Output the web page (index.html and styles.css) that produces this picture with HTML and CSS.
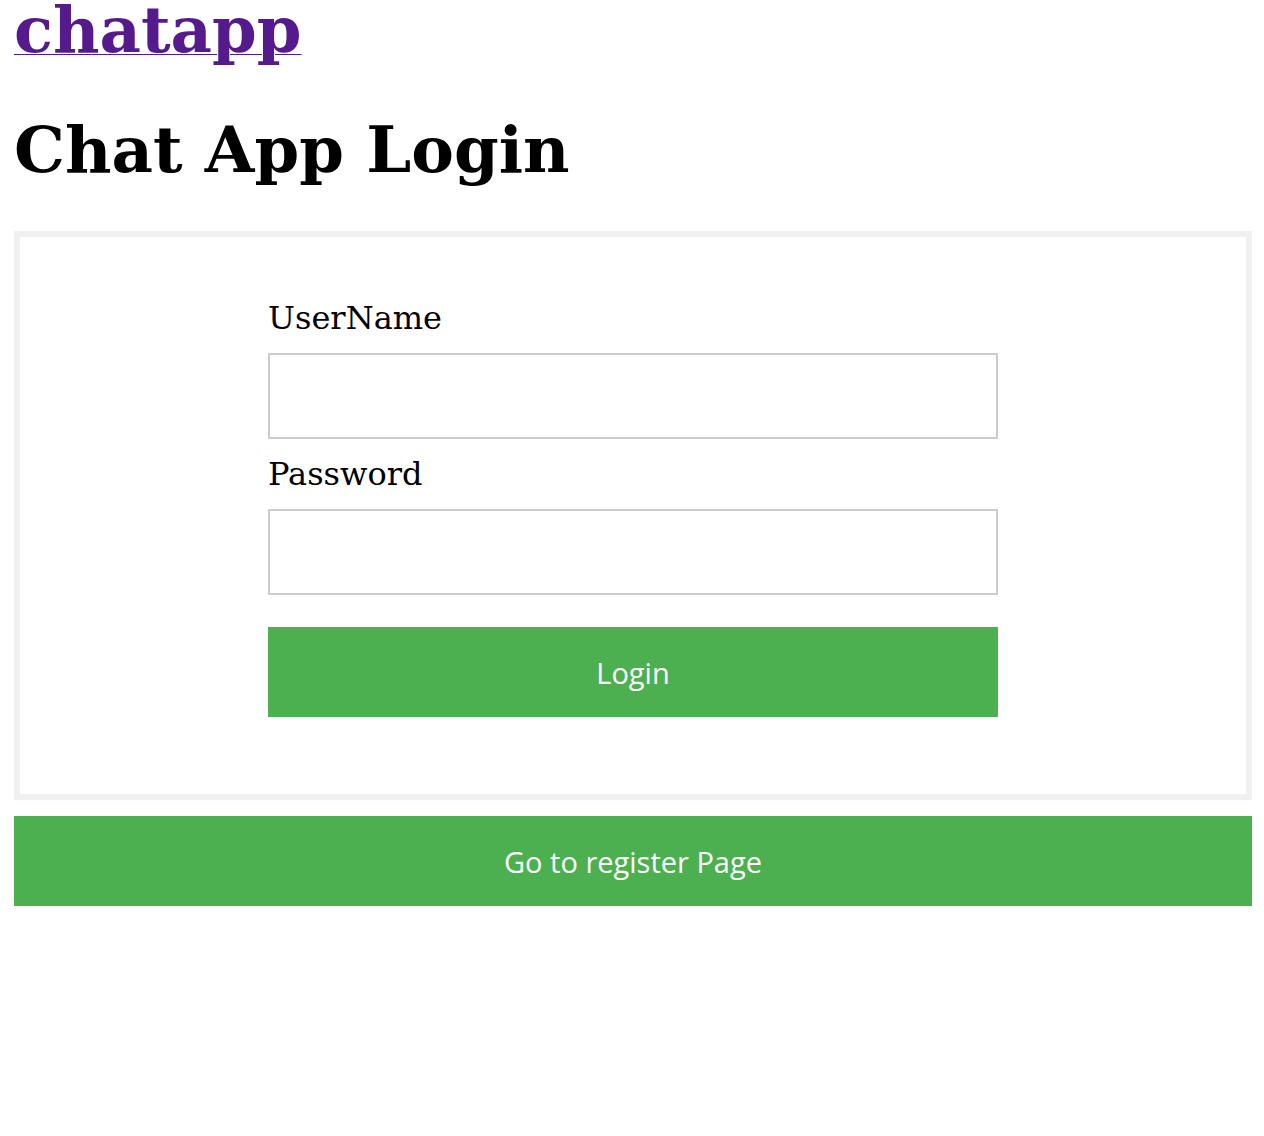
FILE: index.html
```html
<!DOCTYPE html>
<html>
<head>
<meta charset="utf-8">
<link rel="stylesheet" href="styles.css">
</head>
<body>
<a class="brand" href="#">chatapp</a>
<h1 class="title">Chat App Login</h1>
<div class="card">
  <form class="form">
    <label class="label" for="u">UserName</label>
    <input class="field" id="u" type="text">
    <label class="label" for="p">Password</label>
    <input class="field" id="p" type="password">
    <button class="btn btn-login" type="button">Login</button>
  </form>
</div>
<button class="btn btn-register" type="button">Go to register Page</button>
</body>
</html>
```
FILE: styles.css
```css
html, body {
  margin: 0;
  padding: 0;
  background: #fff;
}
body {
  padding: 0 12px 0 14px;
  font-family: "DejaVu Serif", serif;
  display: flex;
  flex-direction: column;
  align-items: stretch;
}
.brand {
  display: block;
  align-self: flex-start;
  font-size: 64px;
  font-weight: bold;
  color: #551a8b;
  line-height: 62px;
  margin-top: -1px;
  text-decoration: underline;
  text-decoration-thickness: 1px;
  text-underline-offset: 2px;
}
.title {
  font-size: 64px;
  font-weight: bold;
  margin: 51px 0 0;
  line-height: 75px;
}
.card {
  margin-top: 44px;
  border: 6px solid #f0f0f0;
  padding: 63px 0 77px;
}
.form {
  width: 730px;
  margin: 0 auto;
  display: flex;
  flex-direction: column;
}
.label {
  font-size: 32px;
  line-height: 37px;
  margin-top: 17px;
  margin-bottom: 16px;
}
.label:first-child {
  margin-top: 0;
}
.field {
  box-sizing: border-box;
  height: 86px;
  border: 2px solid #ccc;
  margin: 0;
  font-size: 24px;
  padding: 0 16px;
}
.btn {
  box-sizing: border-box;
  height: 90px;
  border: none;
  background: #4caf50;
  color: #fff;
  font-family: "Open Sans", sans-serif;
  font-size: 29px;
  cursor: pointer;
  padding: 0;
}
.btn-login {
  margin-top: 32px;
}
.btn-register {
  margin-top: 16px;
}
```
